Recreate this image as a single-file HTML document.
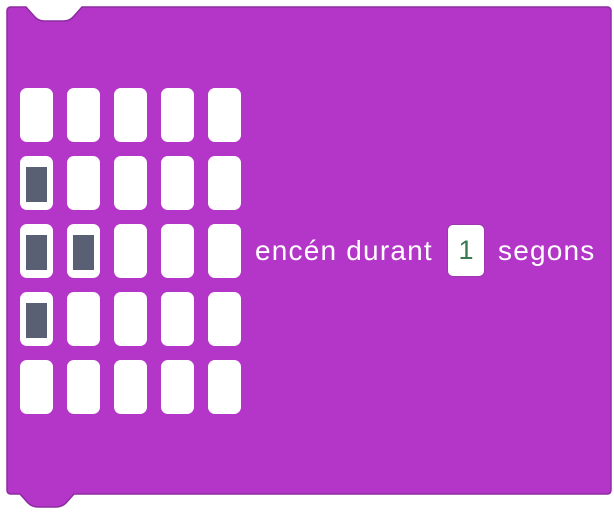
<!DOCTYPE html>
<html><head><meta charset="utf-8"><style>
html,body{margin:0;padding:0;background:#fff;width:614px;height:515px;overflow:hidden}
.c{position:absolute;width:33px;height:54px;background:#fff;border-radius:7px}
.d{position:absolute;left:6px;top:11px;width:21px;height:35px;background:#5a6074}
.t{position:absolute;font-family:"Liberation Sans",sans-serif;font-size:28px;letter-spacing:1.2px;color:#fff;top:235px;line-height:32px}
</style></head><body>
<svg width="614" height="515" style="position:absolute;left:0;top:0">
<path d="M11 7 H26 L34 16 Q38 21 44 21 H64 Q70 21 74 16 L82 7 H607 Q611 7 611 11 V490 Q611 494 607 494 H74 L66 503 Q62 507 56 507 H38 Q32 507 28 503 L20 494 H11 Q7 494 7 490 V11 Q7 7 11 7 Z" fill="#b436c8" stroke="#8d2ba0" stroke-width="1.5"/>
</svg>
<div id="g"></div>
<div class="t" style="left:255px">encén durant</div>
<div style="position:absolute;left:447px;top:224px;width:38px;height:53px;background:#fff;border-radius:6px;border:1px solid #9a3aac;box-sizing:border-box;font-family:'Liberation Sans',sans-serif;font-size:27px;color:#3a7a50;text-align:center;line-height:51px">1</div>
<div class="t" style="left:498px">segons</div>
<script>
var xs=[20,67,114,161,208],ys=[88,156,224,292,360],on={"1,0":1,"2,0":1,"2,1":1,"3,0":1},h="";
for(var r=0;r<5;r++)for(var c=0;c<5;c++){h+='<div class="c" style="left:'+xs[c]+'px;top:'+ys[r]+'px">'+(on[r+","+c]?'<div class="d"></div>':'')+'</div>';}
document.getElementById('g').innerHTML=h;
</script>
</body></html>
